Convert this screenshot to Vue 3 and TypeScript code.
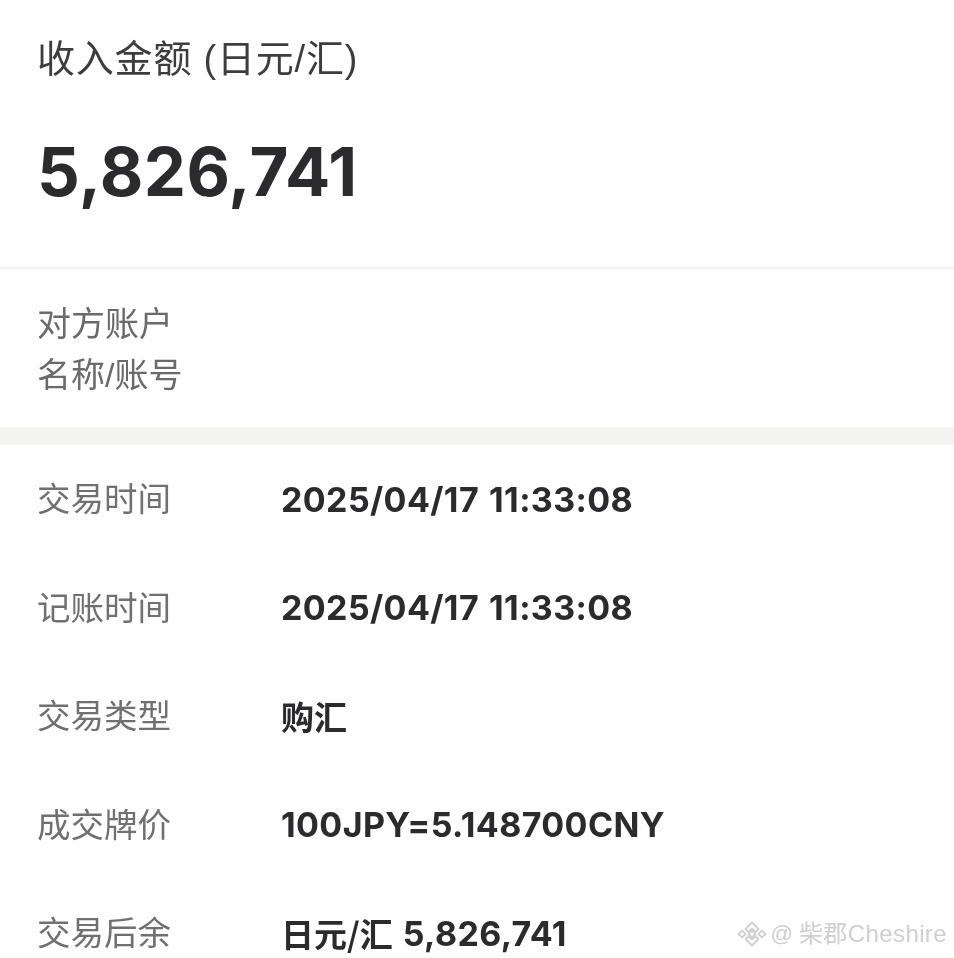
<script setup lang="ts">
interface Row {
  label: string
  cjk?: string
  date?: string
  text?: string
}

const rows: Row[] = [
  { label: '交易时间', date: '2025/04/17', text: '11:33:08' },
  { label: '记账时间', date: '2025/04/17', text: '11:33:08' },
  { label: '交易类型', cjk: '购汇' },
  { label: '成交牌价', text: '100JPY=5.148700CNY' },
  { label: '交易后余', cjk: '日元/汇', text: '5,826,741' },
]
</script>

<template>
  <div class="page">
    <section class="head">
      <div class="title">收入金额 (日元/汇)</div>
      <div class="amount">5,826,741</div>
    </section>
    <section class="party">
      <div class="party-label">对方账户<br />名称/账号</div>
    </section>
    <section class="list">
      <div v-for="row in rows" :key="row.label" class="row">
        <div class="label">{{ row.label }}</div>
        <div class="value">
          <span v-if="row.cjk" class="cjk">{{ row.cjk }}</span>
          <span v-if="row.date">{{ row.date }}</span>
          <span v-if="row.text">{{ row.text }}</span>
        </div>
      </div>
    </section>
    <div class="mark">
      <svg class="mark-logo" width="30" height="30" viewBox="0 0 30 30" fill="#fdfdfd" stroke="#d2d2d2" stroke-width="1.8" stroke-linejoin="round">
        <path d="M8.5 10 15 3.5 21.5 10 18.5 13 15 9.5 11.5 13Z" />
        <path d="M1.5 15 5 11.5 8.5 15 5 18.5Z" />
        <path d="M21.5 15 25 11.5 28.5 15 25 18.5Z" />
        <path d="M11.5 15 15 11.5 18.5 15 15 18.5Z" />
        <path d="M8.5 20 15 26.5 21.5 20 18.5 17 15 20.5 11.5 17Z" />
      </svg>
      <span class="mark-at">@</span>
      <span class="mark-text">柴郡Cheshire</span>
    </div>
  </div>
</template>

<style>
html,
body {
  margin: 0;
  background: #fefefe;
}
</style>

<style scoped>
.page {
  position: relative;
  width: 954px;
  height: 958px;
  overflow: hidden;
  background: #fefefe;
  font-family: "Liberation Sans", "Noto Sans CJK SC", sans-serif;
  filter: blur(0.5px);
}

.head {
  height: 229px;
  padding: 38px 0 0 37px;
  border-bottom: 2px solid #f3f3f2;
}

.title {
  font-size: 38px;
  line-height: 42px;
  letter-spacing: 0.8px;
  color: #3d3d3d;
}

.amount {
  margin-top: 52px;
  font-family: Inter, "Liberation Sans", sans-serif;
  font-size: 67px;
  line-height: 80px;
  font-weight: 700;
  letter-spacing: 0.45px;
  color: #2b2b2d;
}

.party {
  height: 158px;
  padding: 30px 0 0 37px;
  box-sizing: border-box;
}

.party-label {
  font-size: 34px;
  line-height: 51px;
  color: #6a6a6a;
}

.list {
  border-top: 18px solid #f4f4f3;
}

.row {
  display: grid;
  grid-template-columns: 243px 1fr;
  align-items: center;
  height: 108.5px;
  padding-left: 37px;
}

.label {
  font-size: 33.5px;
  line-height: 40px;
  padding-top: 2px;
  color: #707070;
}

.value {
  display: flex;
  gap: 10px;
  padding-top: 1px;
  padding-left: 1px;
  font-family: Inter, "Liberation Sans", "Noto Sans CJK SC", sans-serif;
  font-size: 34px;
  line-height: 40px;
  font-weight: 700;
  letter-spacing: 0.38px;
  color: #2b2b2d;
}

.cjk {
  font-family: "Noto Sans CJK SC", sans-serif;
  font-size: 33px;
  letter-spacing: 0;
  margin-top: -1px;
}

.mark {
  position: absolute;
  right: 7px;
  bottom: 9px;
  display: flex;
  align-items: center;
  color: #cfcfcf;
}

.mark-logo {
  display: block;
}

.mark-at {
  margin-left: 4px;
  font-size: 22px;
  line-height: 30px;
}

.mark-text {
  margin-left: 6px;
  font-size: 24px;
  line-height: 30px;
  letter-spacing: 0.4px;
}
</style>
